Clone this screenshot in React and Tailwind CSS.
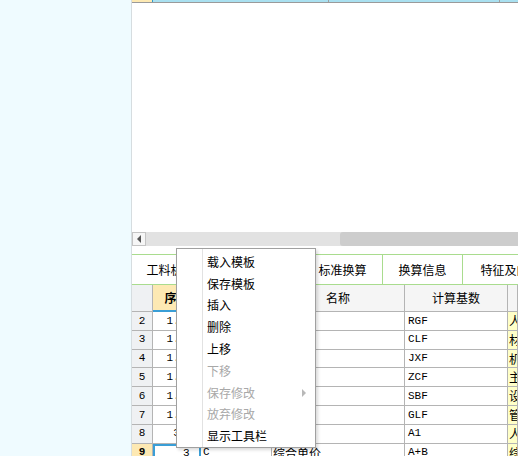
import React from "react";

const CJK = { fontFamily: '"Noto Sans CJK SC", "Noto Sans", sans-serif' };
const MONO = { fontFamily: '"Liberation Mono", "Noto Sans CJK SC", monospace' };

const tabs = [
  { label: "工料机显示", w: "w-[90px]" },
  { label: "单价构成", w: "w-[81px]" },
  { label: "标准换算", w: "w-[80px]" },
  { label: "换算信息", w: "w-[80px]" },
  { label: "特征及内容", w: "w-[96px]" },
];

const rows = [
  { n: 2, seq: "1.1", base: "RGF", note: "人工费" },
  { n: 3, seq: "1.2", base: "CLF", note: "材料费" },
  { n: 4, seq: "1.3", base: "JXF", note: "机械费" },
  { n: 5, seq: "1.4", base: "ZCF", note: "主材费" },
  { n: 6, seq: "1.5", base: "SBF", note: "设备费" },
  { n: 7, seq: "1.6", base: "GLF", note: "管理费" },
  { n: 8, seq: "3", base: "A1", note: "人工费" },
];

const menu = [
  { label: "载入模板" },
  { label: "保存模板" },
  { label: "插入" },
  { label: "删除" },
  { label: "上移" },
  { label: "下移", off: true },
  { label: "保存修改", off: true, sub: true },
  { label: "放弃修改", off: true },
  { label: "显示工具栏" },
];

const cols = "grid grid-cols-[21px_48px_71px_133px_103px_1fr] shrink-0";
const cell = "border-r border-b border-[#b4b4b4] flex items-center overflow-hidden whitespace-nowrap";

function ContextMenu() {
  return (
    <div
      className="absolute left-[176px] top-[248px] w-[140px] bg-white border border-[#a0a0a0] shadow-[2px_2px_3px_rgba(0,0,0,0.15)] pt-[2px]"
      style={CJK}
    >
      <div className="absolute left-[25px] top-0 bottom-0 w-px bg-[#e2e2e2]" />
      {menu.map((m) => (
        <div key={m.label} className="relative h-[21.8px] flex items-center pl-[30px] text-[12px]">
          <span className={m.off ? "text-[#a8a8a8]" : "text-black"}>{m.label}</span>
          {m.sub && (
            <span className="absolute left-[125px] top-[7px] w-0 h-0 border-y-[4px] border-y-transparent border-l-[4px] border-l-[#b8b8b8]" />
          )}
        </div>
      ))}
    </div>
  );
}

export default function App() {
  return (
    <div className="relative w-[518px] h-[456px] overflow-hidden flex bg-white text-black" style={CJK}>
      <div className="w-[132px] shrink-0 bg-[#effbff] border-r border-[#d6dde0]" />

      <div className="flex-1 flex flex-col min-w-0">
        {/* clipped selected row above */}
        <div className="h-[3px] shrink-0 flex border-b border-[#9a9a9a]">
          <div className="w-[20px] bg-[#fde9b3]" />
          <div className="w-px bg-[#3399cc]" />
          <div className="w-[176px] bg-[#a9e0f0] border-r border-[#a0a0a0]" />
          <div className="w-[171px] bg-[#a9e0f0] border-r border-[#a0a0a0]" />
          <div className="flex-1 bg-[#a9e0f0]" />
        </div>

        <div className="h-[229px] shrink-0" />

        {/* horizontal scrollbar */}
        <div className="h-[14px] shrink-0 flex bg-[#e2e2e2]">
          <div className="w-[14px] bg-[#f6f6f6] border border-[#c4c4c4] flex items-center justify-center">
            <span className="w-0 h-0 border-y-[4px] border-y-transparent border-r-[4px] border-r-[#555]" />
          </div>
          <div className="w-[194px]" />
          <div className="flex-1 bg-[#cdcdcd] rounded-l-[3px]" />
        </div>

        <div className="h-[8px] shrink-0" />

        {/* tabs */}
        <div className="h-[31px] shrink-0 flex border-y border-[#a9dc8e] bg-white">
          {tabs.map((t) => (
            <div key={t.label} className={`${t.w} shrink-0 border-r border-[#a9dc8e] flex items-center justify-center text-[12px]`}>
              {t.label}
            </div>
          ))}
        </div>

        {/* table header */}
        <div className={`${cols} h-[27px] bg-[#f5f5f5]`}>
          <div className={`${cell} bg-[#eff1f3]`} />
          <div className="border-r border-[#b4b4b4] border-b-2 border-b-[#3a9ed6] bg-[#fde9b3] flex items-center justify-center text-[12px] font-bold">
            序号
          </div>
          <div className={`${cell} justify-center text-[12px]`}>编码</div>
          <div className={`${cell} justify-center text-[12px]`}>名称</div>
          <div className={`${cell} justify-center text-[12px]`}>计算基数</div>
          <div className={`${cell}`} />
        </div>

        {rows.map((r) => (
          <div key={r.n} className={`${cols} h-[18.8px] text-[11px]`}>
            <div className={`${cell} justify-center bg-[#eff1f3]`} style={MONO}>{r.n}</div>
            <div className={`${cell} justify-center`} style={MONO}>{r.seq}</div>
            <div className={`${cell} pl-[2px]`} style={MONO} />
            <div className={`${cell} pl-[2px] text-[12px]`} />
            <div className={`${cell} pl-[3px]`} style={MONO}>{r.base}</div>
            <div className={`${cell} pl-[1px] bg-[#ffffc8] text-[12px]`} style={CJK}>{r.note}</div>
          </div>
        ))}

        <div className={`${cols} h-[19px] text-[11px]`}>
          <div className={`${cell} justify-center bg-[#fde9b3] font-bold`} style={MONO}>9</div>
          <div className="border-2 border-[#3a9ed6] flex items-center pl-[28px] overflow-hidden" style={MONO}>3</div>
          <div className={`${cell} pl-[2px]`} style={MONO}>C</div>
          <div className={`${cell} pl-[1px] text-[12px]`} style={CJK}>综合单价</div>
          <div className={`${cell} pl-[3px]`} style={MONO}>A+B</div>
          <div className={`${cell} pl-[1px] bg-[#ffffc8] text-[12px]`} style={CJK}>综合单价</div>
        </div>
      </div>

      <ContextMenu />
    </div>
  );
}
